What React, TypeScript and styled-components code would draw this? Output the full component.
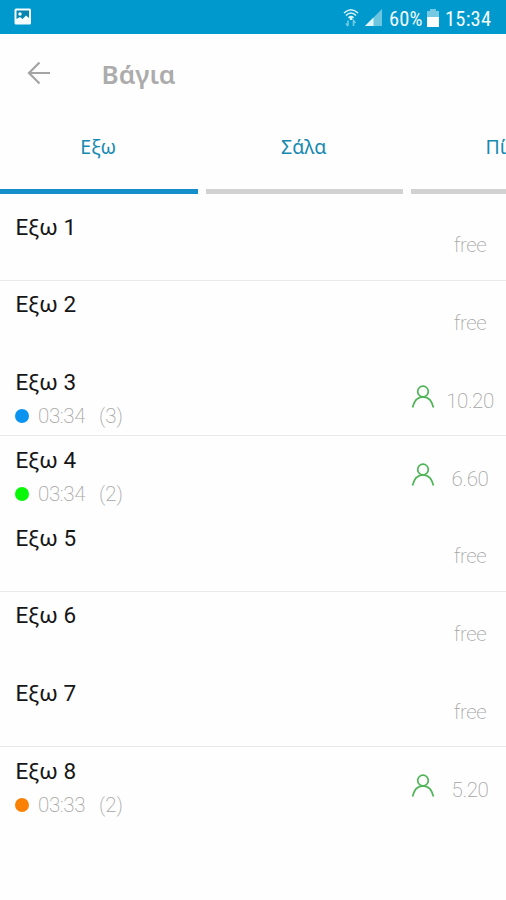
import React from "react";
import styled, { createGlobalStyle } from "styled-components";

const GlobalStyle = createGlobalStyle`
  * { box-sizing: border-box; }
  body { margin: 0; background: #fefefe; font-family: Roboto, "Noto Sans", sans-serif; overflow: hidden; }
`;

const Screen = styled.main`
  width: 506px;
  height: 900px;
  overflow: hidden;
  background: #fefefe;
`;

const StatusBar = styled.header`
  display: flex;
  align-items: center;
  height: 34px;
  padding: 0 14px;
  background: #0099cd;
  color: #f4fbfd;
`;

const StatusIcons = styled.div`
  display: flex;
  align-items: center;
  margin-left: auto;
`;

const StatusText = styled.span<{ $width: number; $tracking: number }>`
  width: ${(p) => p.$width}px;
  font-size: 20.5px;
  line-height: 34px;
  padding-top: 3px;
  white-space: nowrap;
  font-stretch: 85%;
  letter-spacing: ${(p) => p.$tracking}px;
`;

const WifiIcon = styled.svg`
  margin-right: 6px;
`;

const SignalIcon = styled.svg`
  margin-right: 7px;
`;

const BatteryIcon = styled.svg`
  margin: 1px 6px 0 4px;
`;

const AppBar = styled.div`
  display: flex;
  align-items: center;
  height: 78px;
  padding-left: 27px;
`;

const BackButton = styled.button`
  display: flex;
  width: 24px;
  padding: 0;
  border: 0;
  background: none;
`;

const Title = styled.h1`
  margin: 1px 0 0 50.5px;
  font: 600 26px/34px "Noto Sans", sans-serif;
  color: #acacac;
`;

const Tabs = styled.nav`
  display: flex;
  gap: 8px;
  height: 91px;
  width: 506px;
  overflow: hidden;
`;

const Tab = styled.button<{ $active?: boolean }>`
  flex: 0 0 197.5px;
  height: 82px;
  padding: 0 1px 7px 0;
  border: 0;
  border-bottom: 5px solid ${(p) => (p.$active ? "#148fc9" : "#d2d2d2")};
  background: none;
  color: #1689b0;
  font: 400 19.5px/24px "Noto Sans", sans-serif;
`;

const List = styled.ul`
  margin: 0;
  padding: 0;
  list-style: none;
`;

const Row = styled.li<{ $divider?: boolean }>`
  display: flex;
  justify-content: space-between;
  height: 77.75px;
  padding: 0 0 0 15px;
  border-bottom: 1px solid ${(p) => (p.$divider ? "#e9e9e9" : "transparent")};
`;

const Info = styled.div`
  padding-top: 9.6px;
`;

const Name = styled.div`
  padding-left: 0.5px;
  font-size: 22.5px;
  line-height: 28px;
  color: #161616;
`;

const Meta = styled.div`
  display: flex;
  align-items: center;
  height: 28px;
  margin-top: 6px;
  font-size: 20.5px;
  font-weight: 200;
  color: #a6a6a6;
`;

const Dot = styled.span<{ $color: string }>`
  width: 14px;
  height: 14px;
  margin-right: 9px;
  border-radius: 50%;
  background: ${(p) => p.$color};
`;

const Time = styled.span`
  width: 61px;
  letter-spacing: -0.4px;
`;

const Status = styled.div`
  display: flex;
  padding-top: 27.4px;
`;

const PersonIcon = styled.svg`
  margin: -1px -1px 0 0;
`;

const Amount = styled.span`
  width: 72px;
  text-align: center;
  font-size: 20.5px;
  font-weight: 200;
  line-height: 30px;
  letter-spacing: -0.4px;
  color: #a6a6a6;
`;

type Table = { id: number; time?: string; guests?: number; color?: string; total?: string; divider?: boolean };

const tables: Table[] = [
  { id: 1, divider: true },
  { id: 2 },
  { id: 3, time: "03:34", guests: 3, color: "#0a94f0", total: "10.20", divider: true },
  { id: 4, time: "03:34", guests: 2, color: "#08f808", total: "6.60" },
  { id: 5, divider: true },
  { id: 6 },
  { id: 7, divider: true },
  { id: 8, time: "03:33", guests: 2, color: "#fb8104", total: "5.20" },
];

const TableRow = ({ table }: { table: Table }) => (
  <Row $divider={table.divider}>
    <Info>
      <Name>Εξω {table.id}</Name>
      {table.time && (
        <Meta>
          <Dot $color={table.color!} />
          <Time>{table.time}</Time>
          <span>({table.guests})</span>
        </Meta>
      )}
    </Info>
    <Status>
      {table.total && (
        <PersonIcon width="24" height="24" viewBox="0 0 24 24" fill="none" stroke="#4eb456" strokeWidth="1.7">
          <circle cx="12" cy="6.5" r="5.3" />
          <path d="M1.500 22.500C3 16 7 11.800 12 11.800S21 16 22.500 22.500" />
        </PersonIcon>
      )}
      <Amount>{table.total ?? "free"}</Amount>
    </Status>
  </Row>
);

export default function App() {
  return (
    <Screen>
      <GlobalStyle />
      <StatusBar>
        <svg width="18" height="18" viewBox="0 0 18 18">
          <rect x="0.500" y="0.500" width="16.500" height="16" rx="1.500" fill="#f5fdff" />
          <path d="M2.500 2.500H15V10L12 7.500 8.500 11 6 9 2.500 11Z" fill="#0785b0" />
          <circle cx="6" cy="6" r="1.700" fill="#f5fdff" />
        </svg>
        <StatusIcons>
          <WifiIcon width="16" height="19" viewBox="0 0 16 19" fill="none" stroke="#d9f2f6" strokeWidth="1.600">
            <path d="M1 5Q8-1.500 15 5M3 7.500Q8 2.500 13 7.500M5.500 9.800Q8 7.500 10.500 9.800" />
            <path d="M8 9V12" strokeWidth="2.500" />
            <path d="M5 12.500V18M3 15.500L5 18M10.500 18V12.500L12.500 15" stroke="#70cbe1" />
          </WifiIcon>
          <SignalIcon width="17" height="17" viewBox="0 0 17 17">
            <path d="M0 17L17 0V17Z" fill="#6ec5e0" />
            <path d="M0 17L8.500 8.500V17Z" fill="#dff5f9" />
          </SignalIcon>
          <StatusText $width={34} $tracking={0.1}>60%</StatusText>
          <BatteryIcon width="12" height="18" viewBox="0 0 12 18">
            <path d="M3 0H9V2H12V18H0V2H3Z" fill="#75c9e2" />
            <path d="M0 8H12V18H0Z" fill="#fff" />
          </BatteryIcon>
          <StatusText $width={47} $tracking={0.2}>15:34</StatusText>
        </StatusIcons>
      </StatusBar>
      <AppBar>
        <BackButton aria-label="Back">
          <svg width="24" height="24" viewBox="0 0 24 24" fill="none" stroke="#a4a4a4" strokeWidth="2.200">
            <path d="M23 12H2M12.500 1.500L2 12L12.500 22.500" />
          </svg>
        </BackButton>
        <Title>Βάγια</Title>
      </AppBar>
      <Tabs>
        <Tab $active>Εξω</Tab>
        <Tab>Σάλα</Tab>
        <Tab>Πίσω</Tab>
      </Tabs>
      <List>
        {tables.map((table) => (
          <TableRow key={table.id} table={table} />
        ))}
      </List>
    </Screen>
  );
}
